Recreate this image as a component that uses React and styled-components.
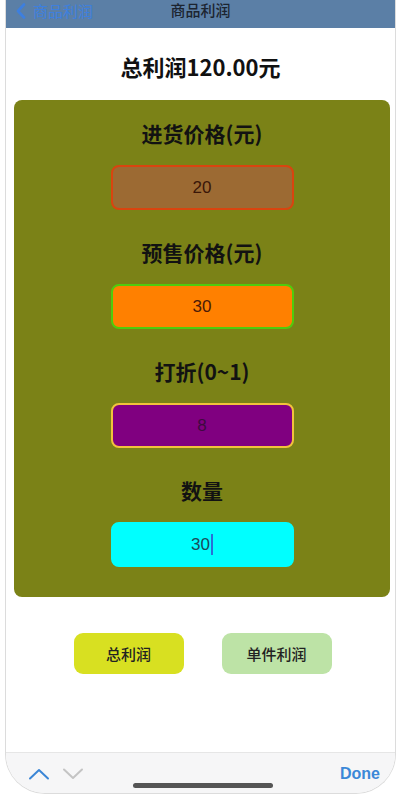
import React from "react";
import styled, { createGlobalStyle } from "styled-components";

const GlobalStyle = createGlobalStyle`
  html, body {
    margin: 0;
    padding: 0;
    background: #ffffff;
    font-family: "Noto Sans CJK SC", "Noto Sans", sans-serif;
  }
`;

const fields = [
  { label: "进货价格(元)", value: "20", bg: "#9c6a33", border: "#d9440f", color: "#3a1608" },
  { label: "预售价格(元)", value: "30", bg: "#ff8000", border: "#4fcc0c", color: "#4a1a08" },
  { label: "打折(0~1)", value: "8", bg: "#800080", border: "#f2c23c", color: "#3e0a3e" },
  { label: "数量", value: "30", bg: "#00ffff", border: "#00ffff", color: "#1c4a5a", caret: true },
];

const App = () => {
  return (
    <>
      <GlobalStyle />
      <Screen>
        <NavBar>
          <BackLink>
            <svg width="10" height="16" viewBox="0 0 10 16">
              <polyline
                points="8,1.5 2,8 8,14.5"
                fill="none"
                stroke="#3d7fdf"
                strokeWidth="2.6"
                strokeLinecap="round"
                strokeLinejoin="round"
              />
            </svg>
            <span>商品利润</span>
          </BackLink>
          <NavTitle>商品利润</NavTitle>
          <span />
        </NavBar>

        <Content>
          <Total>总利润120.00元</Total>

          <Card>
            {fields.map(f => (
              <Group key={f.label}>
                <Label>{f.label}</Label>
                <Field $bg={f.bg} $border={f.border} $color={f.color}>
                  {f.value}
                  {f.caret && <Caret />}
                </Field>
              </Group>
            ))}
          </Card>

          <Actions>
            <ActionButton $bg="#d8e021">总利润</ActionButton>
            <ActionButton $bg="#bde3a6">单件利润</ActionButton>
          </Actions>
        </Content>

        <Toolbar>
          <Arrows>
            <svg width="22" height="12" viewBox="0 0 22 12">
              <polyline
                points="2,10.5 11,2 20,10.5"
                fill="none"
                stroke="#3b86d6"
                strokeWidth="2"
                strokeLinecap="round"
                strokeLinejoin="round"
              />
            </svg>
            <svg width="22" height="12" viewBox="0 0 22 12">
              <polyline
                points="2,1.5 11,10 20,1.5"
                fill="none"
                stroke="#c4c4c4"
                strokeWidth="2"
                strokeLinecap="round"
                strokeLinejoin="round"
              />
            </svg>
          </Arrows>
          <Done>Done</Done>
          <HomeBar />
        </Toolbar>
      </Screen>
    </>
  );
};

export default App;

const Screen = styled.div`
  position: relative;
  box-sizing: border-box;
  width: 391px;
  height: 794px;
  margin-left: 5px;
  border: 1px solid #dcdcdc;
  border-top: none;
  border-radius: 0 0 40px 40px;
  overflow: hidden;
  display: flex;
  flex-direction: column;
  background: #ffffff;
`;

const NavBar = styled.div`
  height: 28px;
  flex-shrink: 0;
  background: #5b7fa6;
  display: grid;
  grid-template-columns: 1fr auto 1fr;
  align-items: center;
  padding: 0 10px;
  box-sizing: border-box;
`;

const BackLink = styled.div`
  display: flex;
  align-items: center;
  gap: 7px;
  color: #3d7fdf;
  font-size: 15px;
  line-height: 20px;
  margin-top: -6px;
`;

const NavTitle = styled.div`
  color: #1c2430;
  font-size: 15px;
  font-weight: 500;
  line-height: 20px;
  margin-top: -9px;
`;

const Content = styled.div`
  flex: 1;
  display: flex;
  flex-direction: column;
`;

const Total = styled.div`
  text-align: center;
  font-size: 22px;
  font-weight: 700;
  color: #111;
  line-height: 30px;
  margin: 23px 0 0;
`;

const Card = styled.div`
  margin: 19px 5px 0 8px;
  padding: 19px 0 30px;
  background: #7b8217;
  border-radius: 8px;
  display: flex;
  flex-direction: column;
  align-items: center;
  gap: 28px;
`;

const Group = styled.div`
  display: flex;
  flex-direction: column;
  align-items: center;
  gap: 17px;
`;

const Label = styled.div`
  font-size: 21px;
  font-weight: 700;
  color: #121212;
  line-height: 29px;
`;

const Field = styled.div`
  box-sizing: border-box;
  width: 183px;
  height: 45px;
  display: flex;
  align-items: center;
  justify-content: center;
  background: ${p => p.$bg};
  border: 2px solid ${p => p.$border};
  border-radius: 8px;
  color: ${p => p.$color};
  font-family: "Liberation Sans", "Noto Sans", sans-serif;
  font-size: 17px;
`;

const Caret = styled.span`
  display: inline-block;
  width: 2px;
  height: 21px;
  margin-left: 1px;
  background: #2a6fd6;
`;

const Actions = styled.div`
  display: flex;
  justify-content: center;
  gap: 38px;
  margin-top: 36px;
  padding-left: 4px;
`;

const ActionButton = styled.div`
  width: 110px;
  height: 41px;
  display: flex;
  align-items: center;
  justify-content: center;
  background: ${p => p.$bg};
  border-radius: 9px;
  font-size: 15px;
  font-weight: 500;
  color: #222;
`;

const Toolbar = styled.div`
  position: relative;
  height: 41px;
  flex-shrink: 0;
  background: #f6f6f7;
  border-top: 1px solid #e6e6e6;
  display: flex;
  align-items: center;
  justify-content: space-between;
  padding: 2px 15px 0 22px;
  box-sizing: border-box;
`;

const Arrows = styled.div`
  display: flex;
  align-items: center;
  gap: 12px;
`;

const Done = styled.div`
  font-family: "Liberation Sans", sans-serif;
  font-size: 16px;
  font-weight: 700;
  color: #3b88d8;
`;

const HomeBar = styled.div`
  position: absolute;
  left: 127px;
  bottom: 5px;
  width: 140px;
  height: 5px;
  border-radius: 3px;
  background: #555555;
`;
